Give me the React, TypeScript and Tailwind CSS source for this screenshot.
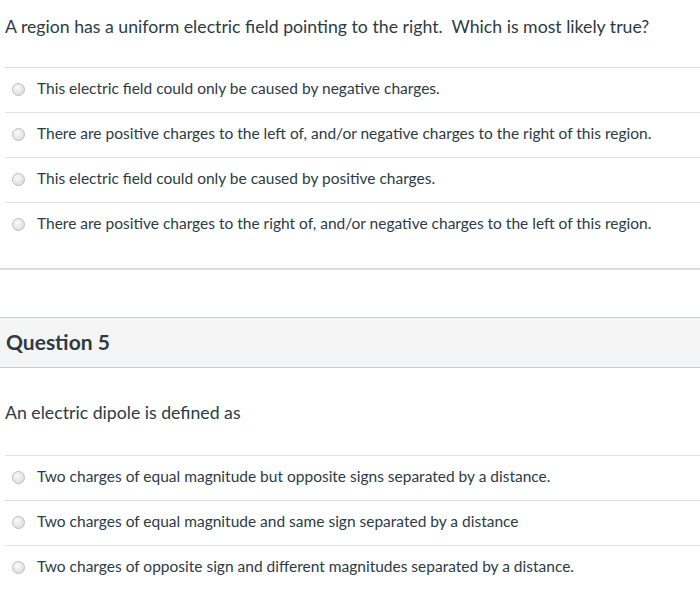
const Q1 = [
  "This electric field could only be caused by negative charges.",
  "There are positive charges to the left of, and/or negative charges to the right of this region.",
  "This electric field could only be caused by positive charges.",
  "There are positive charges to the right of, and/or negative charges to the left of this region.",
];

const Q2 = [
  "Two charges of equal magnitude but opposite signs separated by a distance.",
  "Two charges of equal magnitude and same sign separated by a distance",
  "Two charges of opposite sign and different magnitudes separated by a distance.",
];

function Radio() {
  return (
    <span className="block h-[13px] w-[13px] shrink-0 rounded-full border border-[#bdbdbd] bg-[radial-gradient(circle_at_40%_35%,#fafafa,#d6d6d6)]" />
  );
}

function Answers({ items }: { items: string[] }) {
  return (
    <div className="ml-[5px]">
      {items.map((t) => (
        <div
          key={t}
          className="flex h-[45px] items-center gap-[12px] border-t border-[#e0e0e0] pb-[2px] pl-[7px] text-[15.5px] text-[#2d3b45]"
        >
          <Radio />
          <span>{t}</span>
        </div>
      ))}
    </div>
  );
}

export default function App() {
  return (
    <div
      className="h-[595px] w-[700px] overflow-hidden bg-white"
      style={{ fontFamily: "Lato, 'Open Sans', sans-serif" }}
    >
      <div className="border-b-2 border-[#dcdcdc] pb-[21px]">
        <p className="pl-[5px] pt-[15px] pb-[28px] text-[17.7px] leading-[24px] text-[#2d3b45]">
          A region has a uniform electric field pointing to the right.&nbsp; Which is most likely true?
        </p>
        <Answers items={Q1} />
      </div>

      <div className="mt-[47px] flex h-[51px] items-center border-y border-[#c7cdd1] bg-[#f5f5f5] pb-[2px] pl-[6px]">
        <h2 className="text-[21px] font-bold text-[#2d3b45]">Question 5</h2>
      </div>

      <p className="pl-[5px] pt-[33px] pb-[30px] text-[17.7px] leading-[24px] text-[#2d3b45]">
        An electric dipole is defined as
      </p>
      <Answers items={Q2} />
    </div>
  );
}
